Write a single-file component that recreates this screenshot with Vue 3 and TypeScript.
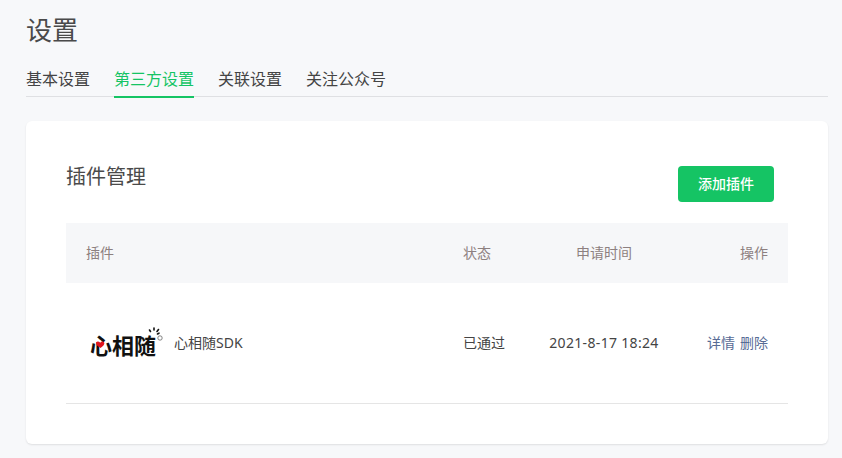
<template>
  <div class="settings">
    <h1 class="settings__title">设置</h1>
    <nav class="tabs">
      <a
        v-for="tab in tabs"
        :key="tab"
        :class="['tabs__item', { 'tabs__item--active': tab === activeTab }]"
      >
        {{ tab }}
      </a>
    </nav>

    <section class="card">
      <div class="card__head">
        <h2 class="card__title">插件管理</h2>
        <button type="button" class="card__add">添加插件</button>
      </div>

      <div class="table">
        <div class="table__row table__row--head">
          <div>插件</div>
          <div>状态</div>
          <div class="table__time">申请时间</div>
          <div class="table__ops">操作</div>
        </div>
        <div v-for="plugin in plugins" :key="plugin.name" class="table__row table__row--body">
          <div class="plugin">
            <div class="logo">
              <span class="logo__text">心相随</span>
              <svg class="logo__mark" width="80" height="36" viewBox="0 0 80 36">
                <path d="M14.500 24c-3.200-1.900-5-3.700-4.300-5.500.7-1.500 2.700-1.300 3.900.2 1.200-1.500 3.400-1.700 4.100-.2.700 1.800-.9 3.600-3.700 5.500z" fill="#e0141e" />
                <g stroke="#111" stroke-width="1.600" stroke-linecap="round">
                  <path d="M64.500 7.500l-1-1.500" />
                  <path d="M68 6V4" />
                  <path d="M71 7.500l1.500-2" />
                  <path d="M71.500 10l1.500-.8" />
                </g>
                <circle cx="74" cy="14" r="2.200" fill="none" stroke="#666" stroke-width=".8" />
              </svg>
            </div>
            <span>{{ plugin.name }}</span>
          </div>
          <div>{{ plugin.status }}</div>
          <div class="table__time table__time--value">{{ plugin.time }}</div>
          <div class="table__ops">
            <a class="table__link">详情</a>
            <a class="table__link">删除</a>
          </div>
        </div>
      </div>
    </section>
  </div>
</template>

<script setup lang="ts">
const tabs: string[] = ['基本设置', '第三方设置', '关联设置', '关注公众号']
const activeTab = '第三方设置'

interface Plugin {
  name: string
  status: string
  time: string
}

const plugins: Plugin[] = [{ name: '心相随SDK', status: '已通过', time: '2021-8-17 18:24' }]
</script>

<style>
html,
body {
  margin: 0;
  background: #f7f8fa;
}
</style>

<style scoped>
.settings {
  box-sizing: border-box;
  height: 458px;
  padding: 0 14px 0 26px;
  overflow: hidden;
  font-family: "Noto Sans", "Noto Sans CJK SC", sans-serif;
  color: #444;
}

.settings__title {
  margin: 0;
  padding-top: 11px;
  font-size: 26px;
  line-height: 38px;
  font-weight: 400;
  color: #4a4a4a;
}

.tabs {
  display: flex;
  gap: 24px;
  margin-top: 13px;
  height: 34px;
  border-bottom: 1px solid #dfe0e3;
}

.tabs__item {
  height: 34px;
  font-size: 16px;
  line-height: 34px;
  color: #444;
}

.tabs__item--active {
  color: #15c464;
  border-bottom: 2px solid #15c464;
}

.card {
  box-sizing: border-box;
  height: 323px;
  margin-top: 24px;
  padding: 45px 40px 0;
  background: #fff;
  border-radius: 6px;
  box-shadow: 0 1px 2px rgba(0, 0, 0, 0.1);
}

.card__head {
  display: flex;
  justify-content: space-between;
  align-items: flex-start;
  height: 57px;
  padding-right: 14px;
}

.card__title {
  margin: -3px 0 0;
  font-size: 20px;
  line-height: 28px;
  font-weight: 400;
  color: #4a4a4a;
}

.card__add {
  width: 96px;
  height: 36px;
  padding: 0 0 2px;
  border: none;
  border-radius: 4px;
  background: #15c464;
  color: #fff;
  font-family: inherit;
  font-size: 14px;
  font-weight: 500;
}

.table__row {
  box-sizing: border-box;
  display: grid;
  grid-template-columns: 377px 85px 112px 108px;
  align-items: center;
  padding: 0 20px;
  font-size: 14px;
  white-space: nowrap;
}

.table__row--head {
  height: 60px;
  padding-bottom: 2px;
  background: #f6f7f9;
  color: #8d8080;
}

.table__row--body {
  height: 121px;
  padding-bottom: 2px;
  border-bottom: 1px solid #e5e5e5;
}

.table__time {
  text-align: center;
}

.table__time--value {
  letter-spacing: 0.33px;
}

.table__ops {
  text-align: right;
}

.table__link {
  margin-left: 5px;
  color: #576b95;
}

.plugin {
  display: flex;
  align-items: center;
  gap: 8px;
}

.logo {
  position: relative;
  width: 80px;
  height: 36px;
}

.logo__text {
  display: block;
  margin-top: 3px;
  padding-left: 4px;
  font-size: 22px;
  line-height: 36px;
  font-weight: 700;
  color: #111;
}

.logo__mark {
  position: absolute;
  left: 0;
  top: 0;
}
</style>
